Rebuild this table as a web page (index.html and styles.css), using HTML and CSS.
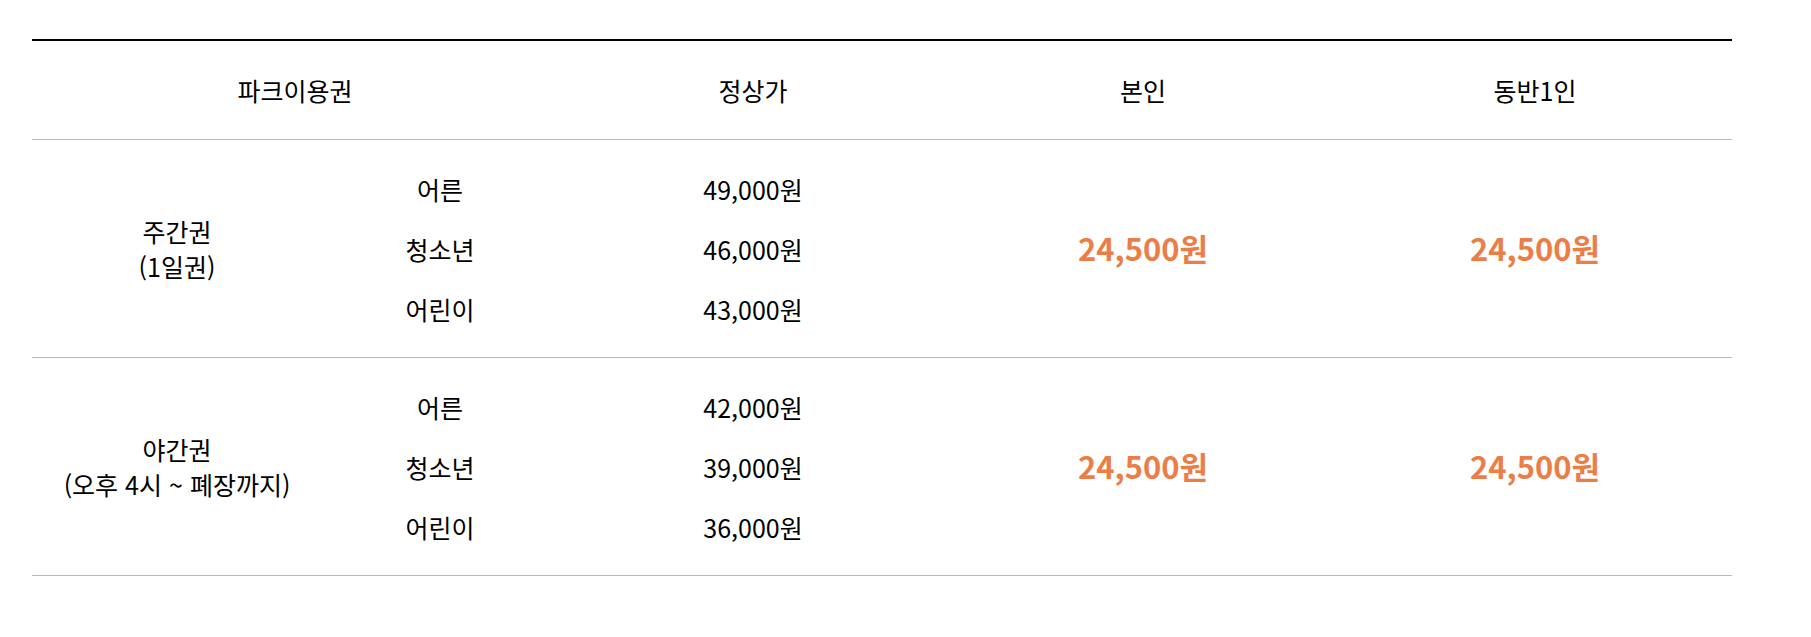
FILE: index.html
```html
<!DOCTYPE html>
<html lang="ko">
<head>
<meta charset="utf-8">
<title>파크이용권</title>
<link rel="stylesheet" href="styles.css">
</head>
<body>
<div class="wrap">
  <table class="price">
    <colgroup>
      <col class="c-type">
      <col class="c-age">
      <col class="c-reg">
      <col class="c-me">
      <col class="c-mate">
    </colgroup>
    <thead>
      <tr>
        <th colspan="2">파크이용권</th>
        <th>정상가</th>
        <th>본인</th>
        <th>동반1인</th>
      </tr>
    </thead>
    <tbody>
      <tr>
        <td class="type">주간권<br>(1일권)</td>
        <td class="list"><span>어른</span><span>청소년</span><span>어린이</span></td>
        <td class="list"><span>49,000원</span><span>46,000원</span><span>43,000원</span></td>
        <td class="sale">24,500원</td>
        <td class="sale">24,500원</td>
      </tr>
      <tr>
        <td class="type">야간권<br>(오후 4시 ~ 폐장까지)</td>
        <td class="list"><span>어른</span><span>청소년</span><span>어린이</span></td>
        <td class="list"><span>42,000원</span><span>39,000원</span><span>36,000원</span></td>
        <td class="sale">24,500원</td>
        <td class="sale">24,500원</td>
      </tr>
    </tbody>
  </table>
</div>
</body>
</html>
```
FILE: styles.css
```css
html, body {
  margin: 0;
  padding: 0;
  background: #fff;
}
body {
  font-family: "Noto Sans CJK KR", "Noto Sans", sans-serif;
  color: #000;
}
.wrap {
  padding: 39px 0 0 32px;
}
.price {
  width: 1700px;
  border-collapse: collapse;
  table-layout: fixed;
  border-top: 2px solid #000;
}
.c-type { width: 290px; }
.c-age { width: 236px; }
.c-reg { width: 390px; }
.c-me { width: 390px; }
.c-mate { width: 394px; }

.price th {
  height: 98px;
  padding: 0;
  font-size: 25px;
  font-weight: 400;
  line-height: 35px;
  text-align: center;
  vertical-align: middle;
  border-bottom: 1px solid #b8b8b8;
}
.price td {
  padding: 19px 0 18px;
  font-size: 25px;
  line-height: 35px;
  text-align: center;
  vertical-align: middle;
  border-bottom: 1px solid #b8b8b8;
}
.price td.list span {
  display: block;
  height: 60px;
  line-height: 60px;
}
.price td.sale {
  padding-bottom: 22px;
  font-size: 31px;
  font-weight: 700;
  color: #eb7d47;
}
```
